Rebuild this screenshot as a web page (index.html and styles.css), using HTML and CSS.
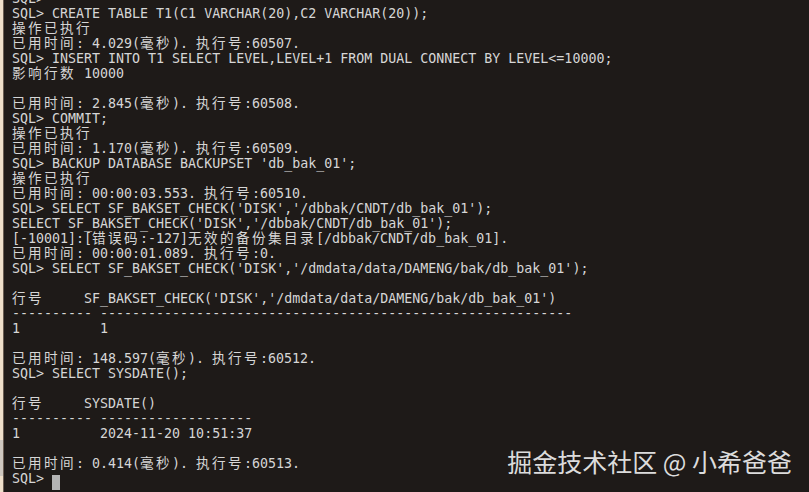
FILE: index.html
```html
<!DOCTYPE html>
<html lang="zh-CN">
<head>
<meta charset="utf-8">
<title>DM SQL terminal</title>
<link rel="stylesheet" href="styles.css">
</head>
<body>
<div class="frame">
  <div class="edge"><div class="edge-tab"></div></div>
  <div class="term">
    <div class="ln">SQL&gt;</div>
    <div class="ln">SQL&gt; CREATE TABLE T1(C1 VARCHAR(20),C2 VARCHAR(20));</div>
    <div class="ln"><span class="w">操作已执行</span></div>
    <div class="ln"><span class="w">已用时间</span>: 4.029(<span class="w">毫秒</span>). <span class="w">执行号</span>:60507.</div>
    <div class="ln">SQL&gt; INSERT INTO T1 SELECT LEVEL,LEVEL+1 FROM DUAL CONNECT BY LEVEL&lt;=10000;</div>
    <div class="ln"><span class="w">影响行数</span> 10000</div>
    <div class="ln"></div>
    <div class="ln"><span class="w">已用时间</span>: 2.845(<span class="w">毫秒</span>). <span class="w">执行号</span>:60508.</div>
    <div class="ln">SQL&gt; COMMIT;</div>
    <div class="ln"><span class="w">操作已执行</span></div>
    <div class="ln"><span class="w">已用时间</span>: 1.170(<span class="w">毫秒</span>). <span class="w">执行号</span>:60509.</div>
    <div class="ln">SQL&gt; BACKUP DATABASE BACKUPSET 'db_bak_01';</div>
    <div class="ln"><span class="w">操作已执行</span></div>
    <div class="ln"><span class="w">已用时间</span>: 00:00:03.553. <span class="w">执行号</span>:60510.</div>
    <div class="ln">SQL&gt; SELECT SF_BAKSET_CHECK('DISK','/dbbak/CNDT/db_bak_01');</div>
    <div class="ln">SELECT SF_BAKSET_CHECK('DISK','/dbbak/CNDT/db_bak_01');</div>
    <div class="ln">[-10001]:[<span class="w">错误码</span>:-127]<span class="w">无效的备份集目录</span>[/dbbak/CNDT/db_bak_01].</div>
    <div class="ln"><span class="w">已用时间</span>: 00:00:01.089. <span class="w">执行号</span>:0.</div>
    <div class="ln">SQL&gt; SELECT SF_BAKSET_CHECK('DISK','/dmdata/data/DAMENG/bak/db_bak_01');</div>
    <div class="ln"></div>
    <div class="ln"><span class="w">行号</span>     SF_BAKSET_CHECK('DISK','/dmdata/data/DAMENG/bak/db_bak_01')</div>
    <div class="ln">---------- -----------------------------------------------------------</div>
    <div class="ln">1          1</div>
    <div class="ln"></div>
    <div class="ln"><span class="w">已用时间</span>: 148.597(<span class="w">毫秒</span>). <span class="w">执行号</span>:60512.</div>
    <div class="ln">SQL&gt; SELECT SYSDATE();</div>
    <div class="ln"></div>
    <div class="ln"><span class="w">行号</span>     SYSDATE()</div>
    <div class="ln">---------- -------------------</div>
    <div class="ln">1          2024-11-20 10:51:37</div>
    <div class="ln"></div>
    <div class="ln"><span class="w">已用时间</span>: 0.414(<span class="w">毫秒</span>). <span class="w">执行号</span>:60513.</div>
    <div class="ln">SQL&gt; <span class="cursor"> </span></div>
  </div>
  <div class="watermark">掘金技术社区 @ 小希爸爸</div>
</div>
</body>
</html>
```

FILE: styles.css
```css
html, body {
  margin: 0;
  padding: 0;
  background: #1e1a18;
}

.frame {
  position: relative;
  display: flex;
  width: 809px;
  height: 492px;
  overflow: hidden;
  background: #1e1a18;
}

.edge {
  position: relative;
  flex: 0 0 3px;
  background: #eedfca;
  border-right: 1px solid #6a5d52;
}

.edge-tab {
  position: absolute;
  left: 0;
  top: 440px;
  width: 3px;
  height: 36px;
  background: #cfc8c0;
}

.term {
  flex: 1;
  padding-left: 8px;
  margin-top: -9.4px;
  font-family: "DejaVu Sans Mono", monospace;
  font-size: 13.3px;
  color: #d6d6d6;
}

.ln {
  height: 15px;
  line-height: 15px;
  white-space: pre;
}

.w {
  font-family: "Noto Sans CJK SC", sans-serif;
  font-size: 13.6px;
  letter-spacing: 2.4px;
  line-height: 0;
}

.cursor {
  display: inline-block;
  width: 8px;
  height: 15px;
  background: #b4b4b4;
  vertical-align: -4px;
}

.watermark {
  position: absolute;
  right: 17px;
  bottom: 16px;
  font-family: "Noto Sans CJK SC", sans-serif;
  font-size: 25px;
  line-height: 30px;
  color: #dcdcdc;
  white-space: nowrap;
}
```
